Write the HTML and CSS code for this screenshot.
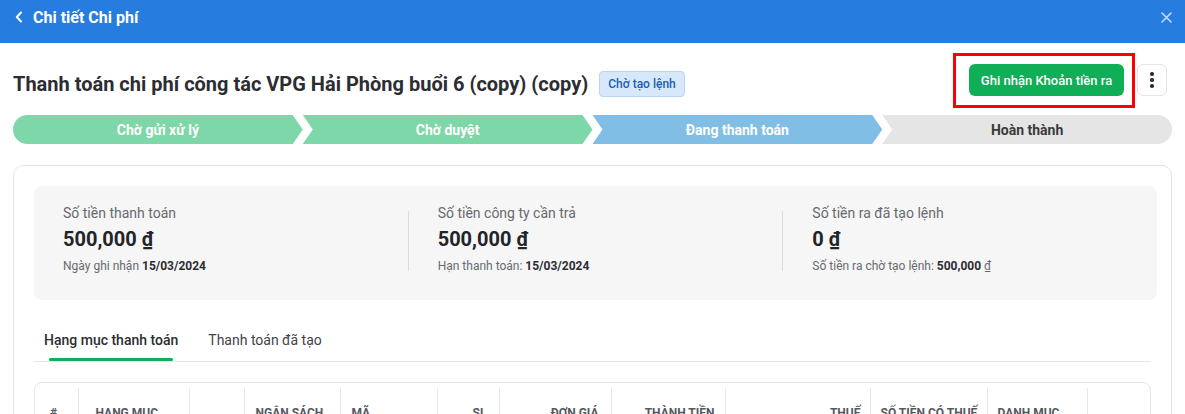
FILE: index.html
```html
<!DOCTYPE html>
<html lang="vi">
<head>
<meta charset="utf-8">
<title>Chi tiết Chi phí</title>
<link rel="stylesheet" href="styles.css">
</head>
<body>
<header class="topbar">
  <div class="topbar-left">
    <svg class="back" width="8" height="12" viewBox="0 0 8 12"><path d="M6 1.5 L1.8 6 L6 10.5" fill="none" stroke="#fff" stroke-width="2" stroke-linecap="round" stroke-linejoin="round"/></svg>
    <span class="topbar-title">Chi tiết Chi phí</span>
  </div>
  <svg class="close" width="11" height="11" viewBox="0 0 11 11"><path d="M1 1 L10 10 M10 1 L1 10" stroke="#c9dcf6" stroke-width="1.6" stroke-linecap="round"/></svg>
</header>

<main class="page">
  <div class="title-row">
    <div class="title-group">
      <h1 class="title">Thanh toán chi phí công tác VPG Hải Phòng buổi 6 (copy) (copy)</h1>
      <span class="badge">Chờ tạo lệnh</span>
    </div>
    <div class="actions">
      <button class="btn-primary">Ghi nhận Khoản tiền ra</button>
      <button class="btn-more" aria-label="more"><span class="dot"></span><span class="dot"></span><span class="dot"></span></button>
      <div class="highlight"></div>
    </div>
  </div>

  <div class="stepper">
    <div class="step step-first done">Chờ gửi xử lý</div>
    <div class="step done">Chờ duyệt</div>
    <div class="step active">Đang thanh toán</div>
    <div class="step step-last todo">Hoàn thành</div>
  </div>

  <section class="card">
    <div class="summary">
      <div class="stat">
        <div class="stat-label">Số tiền thanh toán</div>
        <div class="stat-value">500,000 <span class="cur">₫</span></div>
        <div class="stat-sub">Ngày ghi nhận <b>15/03/2024</b></div>
      </div>
      <div class="divider"></div>
      <div class="stat">
        <div class="stat-label">Số tiền công ty cần trả</div>
        <div class="stat-value">500,000 <span class="cur">₫</span></div>
        <div class="stat-sub">Hạn thanh toán: <b>15/03/2024</b></div>
      </div>
      <div class="divider"></div>
      <div class="stat">
        <div class="stat-label">Số tiền ra đã tạo lệnh</div>
        <div class="stat-value">0 <span class="cur">₫</span></div>
        <div class="stat-sub">Số tiền ra chờ tạo lệnh: <b>500,000</b> <span class="cur-sm">₫</span></div>
      </div>
    </div>

    <div class="content">
      <div class="tabs">
        <div class="tab tab-active">
          <span class="tab-label">Hạng mục thanh toán</span>
          <span class="tab-ink"></span>
        </div>
        <div class="tab">
          <span class="tab-label">Thanh toán đã tạo</span>
          <span class="tab-ink tab-ink-none"></span>
        </div>
      </div>

      <div class="table-wrap">
        <table class="grid">
          <colgroup>
            <col style="width:43px"><col style="width:111px"><col style="width:55px"><col style="width:96px">
            <col style="width:97px"><col style="width:62px"><col style="width:112px"><col style="width:114px">
            <col style="width:145px"><col style="width:117px"><col style="width:100px"><col style="width:63px">
          </colgroup>
          <thead>
            <tr>
              <th class="c-idx">#</th>
              <th class="c-name">HẠNG MỤC</th>
              <th></th>
              <th class="c-l">NGÂN SÁCH</th>
              <th class="c-l">MÃ</th>
              <th class="c-r">SL</th>
              <th class="c-r">ĐƠN GIÁ</th>
              <th class="c-r c-r10">THÀNH TIỀN</th>
              <th class="c-r c-r9">THUẾ</th>
              <th class="c-l2">SỐ TIỀN CÓ THUẾ</th>
              <th class="c-l2">DANH MỤC</th>
              <th class="c-last"></th>
            </tr>
          </thead>
        </table>
      </div>
    </div>
  </section>
</main>
</body>
</html>
```

FILE: styles.css
```css
* { box-sizing: border-box; }

html, body {
  margin: 0;
  padding: 0;
  background: #ffffff;
  font-family: Roboto, "Noto Sans", "Liberation Sans", sans-serif;
  color: #2b2d33;
  overflow: hidden;
}

.topbar {
  height: 43px;
  background: #277ddf;
  display: flex;
  align-items: center;
  justify-content: space-between;
  padding: 0 13px 9px 15px;
}

.topbar-left {
  display: flex;
  align-items: center;
  gap: 10px;
}

.topbar-title {
  color: #ffffff;
  font-size: 16px;
  font-weight: 700;
}

.page {
  padding: 21px 13px 0 13px;
}

.title-row {
  display: flex;
  justify-content: space-between;
  align-items: flex-start;
}

.title-group {
  display: flex;
  align-items: center;
  gap: 11px;
  margin-top: 7px;
}

.title {
  margin: 0;
  font-size: 20px;
  line-height: 26px;
  font-weight: 700;
  color: #2b2d33;
}

.badge {
  height: 26px;
  display: inline-flex;
  align-items: center;
  padding: 0 8px;
  border: 1px solid #b9d5f4;
  background: #d8e8fb;
  border-radius: 4px;
  color: #1a5db3;
  font-size: 12px;
  font-weight: 500;
}

.actions {
  position: relative;
  display: flex;
  align-items: center;
  gap: 13px;
  margin-right: 5px;
}

.btn-primary {
  height: 32px;
  width: 155px;
  border: none;
  border-radius: 6px;
  background: #10ae57;
  color: #ffffff;
  font-family: inherit;
  font-size: 13px;
  font-weight: 500;
  padding: 0;
}

.btn-more {
  width: 30px;
  height: 32px;
  border: 1px solid #e4e4e4;
  border-radius: 6px;
  background: #ffffff;
  display: flex;
  flex-direction: column;
  align-items: center;
  justify-content: center;
  gap: 2.5px;
  padding: 0;
}

.dot {
  width: 3.5px;
  height: 3.5px;
  border-radius: 50%;
  background: #2b2d33;
}

.highlight {
  position: absolute;
  left: -16px;
  top: -11px;
  width: 182px;
  height: 55px;
  border: 3px solid #ff0000;
  pointer-events: none;
}

.stepper {
  display: flex;
  margin-top: 18px;
  height: 29px;
}

.step {
  flex: 1;
  display: flex;
  align-items: center;
  justify-content: center;
  font-size: 14px;
  font-weight: 700;
  color: #ffffff;
  clip-path: polygon(0 0, calc(100% - 10px) 0, 100% 50%, calc(100% - 10px) 100%, 0 100%, 10px 50%);
}

.step-first {
  border-radius: 15px 0 0 15px;
  clip-path: polygon(0 0, calc(100% - 10px) 0, 100% 50%, calc(100% - 10px) 100%, 0 100%);
}

.step-last {
  border-radius: 0 15px 15px 0;
  clip-path: polygon(0 0, 100% 0, 100% 100%, 0 100%, 10px 50%);
}

.done { background: #7ed7a8; }
.active { background: #80bee5; }
.todo { background: #e5e5e5; color: #3a3a3a; }

.card {
  margin-top: 21px;
  border: 1px solid #e3e3e3;
  border-radius: 10px;
  padding: 20px 14px 40px 20px;
}

.summary {
  background: #f6f6f6;
  border-radius: 8px;
  display: flex;
  align-items: center;
  padding: 17px 0 26px 0;
}

.stat {
  flex: 1;
  padding-left: 29px;
}

.divider {
  width: 1px;
  height: 60px;
  background: #dcdcdc;
  align-self: center;
  margin-top: 5px;
}

.stat-label {
  font-size: 14px;
  line-height: 20px;
  color: #666a70;
}

.stat-value {
  font-size: 20px;
  line-height: 26px;
  font-weight: 700;
  color: #222428;
  margin-top: 3px;
}

.cur { text-decoration: underline; text-underline-offset: 2px; }

.stat-sub {
  font-size: 12px;
  line-height: 16px;
  color: #666a70;
  margin-top: 6px;
}

.stat-sub b { color: #2b2d33; font-weight: 700; }

.cur-sm { text-decoration: underline; }

.content {
  margin-right: 6px;
}

.tabs {
  display: flex;
  gap: 30px;
  margin-top: 30px;
  padding-left: 10px;
  border-bottom: 1px solid #e8e8e8;
}

.tab {
  display: flex;
  flex-direction: column;
}

.tab-label {
  font-size: 14px;
  line-height: 20px;
  color: #40444a;
}

.tab-active .tab-label {
  font-weight: 500;
  color: #2b2d33;
}

.tab-ink {
  height: 3px;
  margin: 8px 5px 0 5px;
  background: #10ae57;
  border-radius: 2px;
}

.tab-ink-none { background: transparent; }

.table-wrap {
  margin-top: 20px;
  border: 1px solid #e6e6e6;
  border-radius: 8px;
  padding-top: 5px;
}

.grid {
  width: 100%;
  table-layout: fixed;
  border-collapse: collapse;
}

.grid th {
  height: 50px;
  font-size: 12px;
  font-weight: 700;
  color: #55595f;
  text-align: left;
  border-right: 1px solid #e8e8e8;
  padding: 0 10px;
  white-space: nowrap;
  overflow: hidden;
}

.grid th.c-last { border-right: none; }
.grid th.c-idx { padding-left: 15px; }
.grid th.c-name { padding-left: 17px; }
.grid th.c-l { padding-left: 11px; }
.grid th.c-l2 { padding-left: 10px; }
.grid th.c-r { text-align: right; padding-right: 12px; }
.grid th.c-r10 { padding-right: 10px; }
.grid th.c-r9 { padding-right: 9px; }
```
